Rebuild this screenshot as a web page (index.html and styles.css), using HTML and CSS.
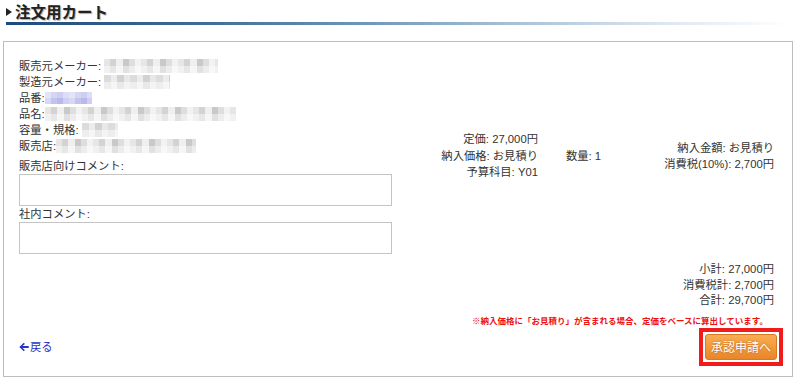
FILE: index.html
```html
<!DOCTYPE html>
<html lang="ja">
<head>
<meta charset="utf-8">
<title>注文用カート</title>
<link rel="stylesheet" href="styles.css">
</head>
<body>
<div class="title">
  <span class="tri"></span>
  <h1>注文用カート</h1>
</div>
<div class="rule"></div>
<div class="panel">
  <div class="item">
    <div class="info">
      <div class="line">販売元メーカー: <span class="blur" style="width:114px"></span></div>
      <div class="line">製造元メーカー: <span class="blur b2" style="width:66px"></span></div>
      <div class="line">品番:<span class="blur blue" style="width:47px"></span></div>
      <div class="line">品名:<span class="blur" style="width:191px"></span></div>
      <div class="line">容量・規格: <span class="blur b2" style="width:36px"></span></div>
      <div class="line">販売店:<span class="blur" style="width:140px"></span></div>
      <label class="clabel first">販売店向けコメント:</label>
      <textarea class="comment"></textarea>
      <label class="clabel">社内コメント:</label>
      <textarea class="comment"></textarea>
    </div>
    <div class="prices">
      <div>定価: 27,000円</div>
      <div>納入価格: お見積り</div>
      <div>予算科目: Y01</div>
    </div>
    <div class="qty">数量: 1</div>
    <div class="amounts">
      <div>納入金額: お見積り</div>
      <div>消費税(10%): 2,700円</div>
    </div>
  </div>
  <div class="totals">
    <div>小計: 27,000円</div>
    <div>消費税計: 2,700円</div>
    <div>合計: 29,700円</div>
  </div>
  <p class="note">※納入価格に「お見積り」が含まれる場合、定価をベースに算出しています。</p>
  <div class="actions">
    <a class="back" href="#"><svg class="arrow" viewBox="0 0 10 10" width="10" height="10"><path d="M0.3 5 L4.8 0.8 L5.9 1.9 L3.5 4.1 L9.7 4.1 L9.7 5.9 L3.5 5.9 L5.9 8.1 L4.8 9.2 Z" fill="#2a33c8"/></svg>戻る</a>
    <span class="highlight"><button class="submit">承認申請へ</button></span>
  </div>
</div>
</body>
</html>
```
FILE: styles.css
```css
* { box-sizing: border-box; }
body {
  margin: 0;
  background: #fff;
  font-family: "Liberation Sans", "Noto Sans CJK JP", sans-serif;
  color: #333;
  width: 799px;
}
.title {
  display: flex;
  align-items: center;
  height: 22px;
  padding-left: 6px;
}
.tri {
  width: 0;
  height: 0;
  border-top: 4px solid transparent;
  border-bottom: 4px solid transparent;
  border-left: 6px solid #222;
  margin-top: 2px;
  margin-right: 3px;
}
.title h1 {
  margin: 0;
  font-size: 15.5px;
  line-height: 22px;
  font-weight: bold;
  color: #222;
  text-shadow: 1px 1px 1px #aaa;
  font-family: "Noto Sans CJK JP", sans-serif;
}
.rule {
  height: 3px;
  margin: 0 9px 16px 6px;
  background: linear-gradient(to right, #1d4b7a 0%, #3c6c97 25%, #6d95b7 45%, #a9c1d6 65%, #dfe8f1 85%, #fff 100%);
}
.panel {
  margin: 0 6px 0 3px;
  border: 1px solid #bdbdbd;
  padding: 16px 18px 16px 15px;
  font-size: 11.3px;
}
.item {
  display: flex;
  align-items: center;
}
.info {
  width: 373px;
  flex: none;
}
.line {
  line-height: 16px;
  height: 16px;
  white-space: nowrap;
}
.blur {
  display: inline-block;
  height: 14px;
  vertical-align: -3px;
  background-image:
    linear-gradient(180deg, rgba(255,255,255,0) 0 7px, rgba(255,255,255,.45) 7px 14px),
    repeating-linear-gradient(90deg, #e6e6e6 0 6px, #d3d3d3 6px 12px, #efefef 12px 19px, #c9c9c9 19px 25px, #dedede 25px 31px, #f2f2f2 31px 37px);
}
.blur.b2 {
  background-image:
    linear-gradient(180deg, rgba(255,255,255,0) 0 7px, rgba(255,255,255,.5) 7px 14px),
    repeating-linear-gradient(90deg, #dcdcdc 0 7px, #ececec 7px 13px, #d2d2d2 13px 20px, #e8e8e8 20px 26px);
}
.blur.blue {
  height: 12px;
  vertical-align: -2px;
  background-image:
    linear-gradient(180deg, rgba(255,255,255,.3) 0 6px, rgba(255,255,255,0) 6px 12px),
    repeating-linear-gradient(90deg, #d8d8f6 0 6px, #c3c3f0 6px 12px, #b9b9ec 12px 18px, #cfcff4 18px 24px);
}
.clabel {
  display: block;
  line-height: 16px;
}
.clabel.first { margin-top: 4px; }
.comment {
  display: block;
  width: 373px;
  height: 32px;
  margin: 0;
  border: 1px solid #c4c4c4;
  resize: none;
  background: #fff;
}
.prices {
  width: 146px;
  flex: none;
  text-align: right;
  line-height: 16.5px;
}
.qty {
  flex: none;
  margin-left: 28px;
  line-height: 16px;
}
.amounts {
  flex: 1;
  text-align: right;
  line-height: 16px;
}
.totals {
  margin-top: 8px;
  text-align: right;
  line-height: 15.5px;
}
.note {
  margin: 5px 0 0;
  text-align: right;
  padding-right: 6px;
  color: #ee1111;
  font-weight: bold;
  font-size: 8.5px;
  line-height: 12px;
  font-family: "Noto Sans CJK JP", sans-serif;
}
.actions {
  margin-top: 8px;
  display: flex;
  align-items: center;
  justify-content: space-between;
  margin-right: -3px;
}
.back {
  display: flex;
  align-items: center;
  color: #2a33c8;
  text-decoration: none;
  line-height: 16px;
}
.arrow { margin-right: 1px; }
.highlight {
  display: block;
  margin: -6px;
  padding: 2px;
  border: 4px solid #f01c1c;
  background: #fff;
}
.submit {
  display: block;
  width: 72px;
  height: 26px;
  padding: 0;
  border: 1px solid #d97a22;
  border-radius: 3px;
  background: linear-gradient(to bottom, #f9ad55 0%, #f29a3c 50%, #e8852a 100%);
  color: #fff;
  font-family: "Noto Sans CJK JP", sans-serif;
  font-size: 12px;
  text-shadow: 0 0 2px rgba(150,70,0,.7);
}
```
